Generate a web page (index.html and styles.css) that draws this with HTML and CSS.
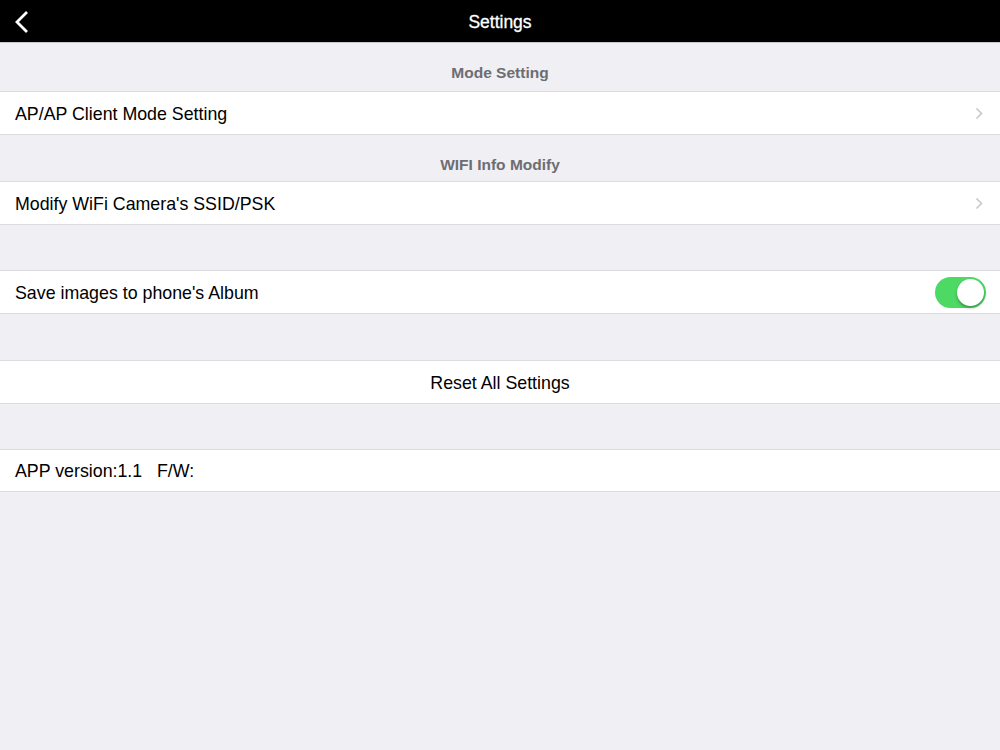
FILE: index.html
```html
<!DOCTYPE html>
<html>
<head>
<meta charset="utf-8">
<link rel="stylesheet" href="styles.css">
</head>
<body>
<div class="nav">
  <svg class="back" width="16" height="24" viewBox="0 0 16 24"><path d="M13 2 L3 12 L13 22" fill="none" stroke="#fff" stroke-width="2.8" stroke-linecap="butt" stroke-linejoin="miter"/></svg>
  <div class="title">Settings</div>
</div>
<div class="gap g1"><span class="hdr">Mode Setting</span></div>
<div class="row"><span class="label">AP/AP Client Mode Setting</span><svg class="chev" width="8" height="13" viewBox="0 0 8 13"><path d="M1.5 1.5 L6.5 6.5 L1.5 11.5" fill="none" stroke="#c7c7cc" stroke-width="1.6"/></svg></div>
<div class="gap g2"><span class="hdr">WIFI Info Modify</span></div>
<div class="row"><span class="label">Modify WiFi Camera's SSID/PSK</span><svg class="chev" width="8" height="13" viewBox="0 0 8 13"><path d="M1.5 1.5 L6.5 6.5 L1.5 11.5" fill="none" stroke="#c7c7cc" stroke-width="1.6"/></svg></div>
<div class="gap g3"></div>
<div class="row"><span class="label">Save images to phone's Album</span><span class="toggle"><span class="knob"></span></span></div>
<div class="gap g2"></div>
<div class="row center"><span class="label">Reset All Settings</span></div>
<div class="gap g3"></div>
<div class="row last"><span class="label">APP version:1.1&nbsp;&nbsp;&nbsp;F/W:</span></div>
</body>
</html>
```
FILE: styles.css
```css
html, body {
  margin: 0;
  padding: 0;
  background: #efeff4;
  font-family: "Liberation Sans", Arial, sans-serif;
  width: 1000px;
  height: 750px;
  overflow: hidden;
}
.nav {
  height: 42px;
  background: #000;
  border-bottom: 1px solid #c8c7cc;
  display: flex;
  align-items: center;
  justify-content: center;
  position: relative;
}
.back {
  position: absolute;
  left: 14px;
  top: 10px;
}
.title {
  color: #fff;
  font-size: 17.5px;
  font-weight: normal;
  padding-top: 2px;
  -webkit-text-stroke: 0.3px #fff;
}
.gap {
  display: flex;
  align-items: flex-end;
  justify-content: center;
}
.g1 { height: 48px; }
.g2 { height: 46px; }
.g3 { height: 45px; }
.hdr {
  color: #6d6d72;
  font-size: 15.5px;
  font-weight: bold;
  padding-bottom: 9px;
}
.g2 .hdr { padding-bottom: 7px; }
.row {
  height: 42px;
  background: #fff;
  border-top: 1px solid #dcdce0;
  border-bottom: 1px solid #dcdce0;
  display: flex;
  align-items: center;
  padding: 0 15px;
}
.row.last { height: 41px; }
.row.center { justify-content: center; }
.label {
  font-size: 17.8px;
  color: #000;
  flex: 1;
  padding-top: 2px;
}
.row.center .label { flex: none; }
.chev {
  margin-right: 2px;
}
.toggle {
  width: 51px;
  height: 31px;
  border-radius: 16px;
  background: #4cd964;
  position: relative;
  margin-right: -1px;
}
.knob {
  position: absolute;
  right: 2px;
  top: 2px;
  width: 27px;
  height: 27px;
  border-radius: 50%;
  background: #fff;
  box-shadow: 0 2px 3px rgba(0,0,0,0.3);
}
```
